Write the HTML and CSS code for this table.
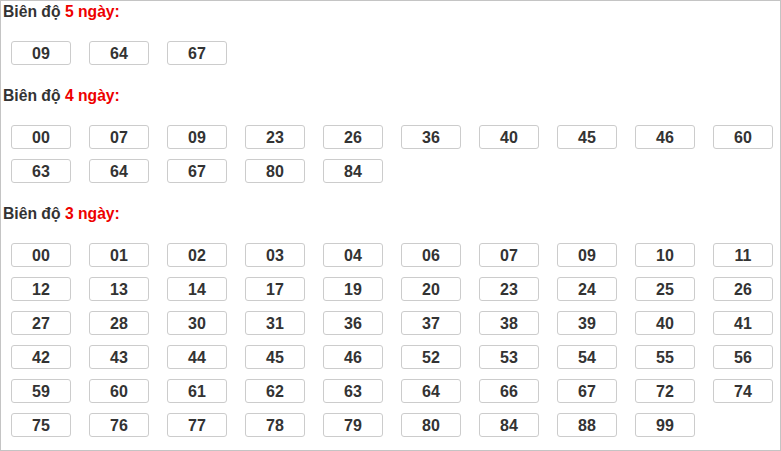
FILE: index.html
```html
<!DOCTYPE html>
<html lang="vi">
<head>
<meta charset="utf-8">
<link rel="stylesheet" href="styles.css">
</head>
<body>
<div class="panel">
  <div class="title">Biên độ <span class="hl">5 ngày:</span></div>
  <div class="nums">
    <span class="num">09</span><span class="num">64</span><span class="num">67</span>
  </div>
  <div class="title">Biên độ <span class="hl">4 ngày:</span></div>
  <div class="nums">
    <span class="num">00</span><span class="num">07</span><span class="num">09</span><span class="num">23</span><span class="num">26</span><span class="num">36</span><span class="num">40</span><span class="num">45</span><span class="num">46</span><span class="num">60</span>
    <span class="num">63</span><span class="num">64</span><span class="num">67</span><span class="num">80</span><span class="num">84</span>
  </div>
  <div class="title">Biên độ <span class="hl">3 ngày:</span></div>
  <div class="nums">
    <span class="num">00</span><span class="num">01</span><span class="num">02</span><span class="num">03</span><span class="num">04</span><span class="num">06</span><span class="num">07</span><span class="num">09</span><span class="num">10</span><span class="num">11</span>
    <span class="num">12</span><span class="num">13</span><span class="num">14</span><span class="num">17</span><span class="num">19</span><span class="num">20</span><span class="num">23</span><span class="num">24</span><span class="num">25</span><span class="num">26</span>
    <span class="num">27</span><span class="num">28</span><span class="num">30</span><span class="num">31</span><span class="num">36</span><span class="num">37</span><span class="num">38</span><span class="num">39</span><span class="num">40</span><span class="num">41</span>
    <span class="num">42</span><span class="num">43</span><span class="num">44</span><span class="num">45</span><span class="num">46</span><span class="num">52</span><span class="num">53</span><span class="num">54</span><span class="num">55</span><span class="num">56</span>
    <span class="num">59</span><span class="num">60</span><span class="num">61</span><span class="num">62</span><span class="num">63</span><span class="num">64</span><span class="num">66</span><span class="num">67</span><span class="num">72</span><span class="num">74</span>
    <span class="num">75</span><span class="num">76</span><span class="num">77</span><span class="num">78</span><span class="num">79</span><span class="num">80</span><span class="num">84</span><span class="num">88</span><span class="num">99</span>
  </div>
</div>
</body>
</html>
```
FILE: styles.css
```css
html, body {
  margin: 0;
  padding: 0;
  background: #fff;
}
.panel {
  box-sizing: border-box;
  width: 781px;
  height: 451px;
  border: 1px solid #c4c4c4;
  font-family: "Liberation Sans", Arial, sans-serif;
  color: #333;
}
.title {
  font-size: 15.7px;
  font-weight: bold;
  line-height: 22px;
  padding-left: 2px;
}
.hl {
  color: #e00;
}
.nums {
  display: flex;
  flex-wrap: wrap;
  gap: 10px 18px;
  padding-left: 10px;
  margin: 18px 0 20px;
}
.num {
  box-sizing: border-box;
  width: 60px;
  height: 24px;
  border: 1px solid #ccc;
  border-radius: 3px;
  font-size: 16px;
  font-weight: bold;
  line-height: 23px;
  text-align: center;
  color: #333;
}
```
